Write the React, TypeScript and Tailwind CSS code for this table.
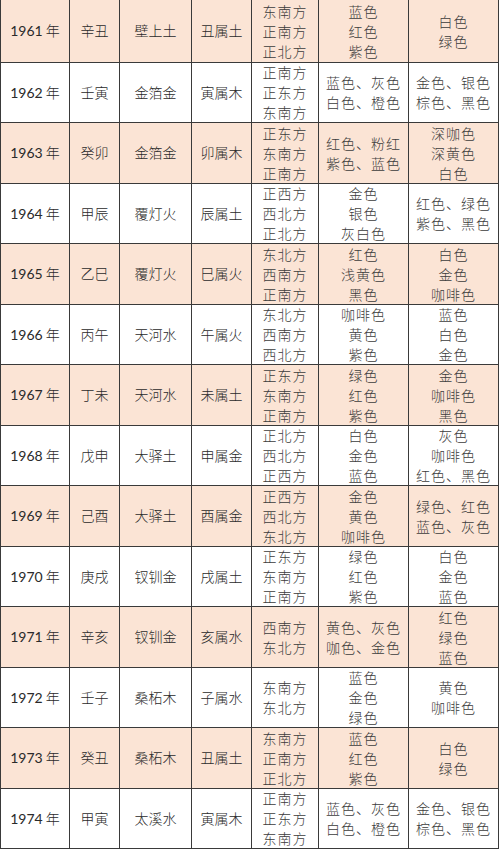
import React from "react";

type Row = {
  y: string;
  gz: string;
  ny: string;
  sx: string;
  dir: string[];
  c1: string[];
  c2: string[];
};

const rows: Row[] = [
  { y: "1961", gz: "辛丑", ny: "壁上土", sx: "丑属土", dir: ["东南方", "正南方", "正北方"], c1: ["蓝色", "红色", "紫色"], c2: ["白色", "绿色"] },
  { y: "1962", gz: "壬寅", ny: "金箔金", sx: "寅属木", dir: ["正南方", "正东方", "东南方"], c1: ["蓝色、灰色", "白色、橙色"], c2: ["金色、银色", "棕色、黑色"] },
  { y: "1963", gz: "癸卯", ny: "金箔金", sx: "卯属木", dir: ["正东方", "东南方", "正南方"], c1: ["红色、粉红", "紫色、蓝色"], c2: ["深咖色", "深黄色", "白色"] },
  { y: "1964", gz: "甲辰", ny: "覆灯火", sx: "辰属土", dir: ["正西方", "西北方", "正北方"], c1: ["金色", "银色", "灰白色"], c2: ["红色、绿色", "紫色、黑色"] },
  { y: "1965", gz: "乙巳", ny: "覆灯火", sx: "巳属火", dir: ["东北方", "西南方", "正南方"], c1: ["红色", "浅黄色", "黑色"], c2: ["白色", "金色", "咖啡色"] },
  { y: "1966", gz: "丙午", ny: "天河水", sx: "午属火", dir: ["东北方", "西南方", "西北方"], c1: ["咖啡色", "黄色", "紫色"], c2: ["蓝色", "白色", "金色"] },
  { y: "1967", gz: "丁未", ny: "天河水", sx: "未属土", dir: ["正东方", "东南方", "正南方"], c1: ["绿色", "红色", "紫色"], c2: ["金色", "咖啡色", "黑色"] },
  { y: "1968", gz: "戊申", ny: "大驿土", sx: "申属金", dir: ["正北方", "西北方", "正西方"], c1: ["白色", "金色", "蓝色"], c2: ["灰色", "咖啡色", "红色、黑色"] },
  { y: "1969", gz: "己酉", ny: "大驿土", sx: "酉属金", dir: ["正西方", "西北方", "东北方"], c1: ["金色", "黄色", "咖啡色"], c2: ["绿色、红色", "蓝色、灰色"] },
  { y: "1970", gz: "庚戌", ny: "钗钏金", sx: "戌属土", dir: ["正东方", "东南方", "正南方"], c1: ["绿色", "红色", "紫色"], c2: ["白色", "金色", "蓝色"] },
  { y: "1971", gz: "辛亥", ny: "钗钏金", sx: "亥属水", dir: ["西南方", "东北方"], c1: ["黄色、灰色", "咖色、金色"], c2: ["红色", "绿色", "蓝色"] },
  { y: "1972", gz: "壬子", ny: "桑柘木", sx: "子属水", dir: ["东南方", "东北方"], c1: ["蓝色", "金色", "绿色"], c2: ["黄色", "咖啡色"] },
  { y: "1973", gz: "癸丑", ny: "桑柘木", sx: "丑属土", dir: ["东南方", "正南方", "正北方"], c1: ["蓝色", "红色", "紫色"], c2: ["白色", "绿色"] },
  { y: "1974", gz: "甲寅", ny: "太溪水", sx: "寅属木", dir: ["正南方", "正东方", "东南方"], c1: ["蓝色、灰色", "白色、橙色"], c2: ["金色、银色", "棕色、黑色"] },
];

const cjk = "[font-family:'Noto_Sans_CJK_SC',sans-serif]";

function Lines({ items }: { items: string[] }) {
  return (
    <div className="h-[58px] flex flex-col items-center justify-center overflow-visible">
      {items.map((t, i) => (
        <div key={i} className="leading-[20px] tracking-[1px] whitespace-nowrap">
          {t}
        </div>
      ))}
    </div>
  );
}

export default function App() {
  return (
    <div className="w-[500px] h-[850px] overflow-hidden bg-white">
      <table className={`table-fixed border-collapse w-[498px] text-[14px] font-light text-[#2a2a2a] ${cjk}`}>
        <colgroup>
          <col className="w-[69px]" />
          <col className="w-[50px]" />
          <col className="w-[72px]" />
          <col className="w-[60px]" />
          <col className="w-[67px]" />
          <col className="w-[90px]" />
          <col className="w-[90px]" />
        </colgroup>
        <tbody>
          {rows.map((r, i) => {
            const bg = i % 2 === 0 ? "bg-[#fbe4d5]" : "bg-white";
            const h = i === 0 ? "h-[62px] border-t-0" : "h-[60.5px]";
            const cell = `border border-[#3a3a3a] ${bg} ${h} p-0 text-center align-middle overflow-visible`;
            return (
              <tr key={r.y}>
                <td className={cell}>
                  <span className="[font-family:Lato,'Noto_Sans_CJK_SC',sans-serif] font-normal text-[14px]">{r.y}</span>
                  <span className="ml-[3px]">年</span>
                </td>
                <td className={cell}>{r.gz}</td>
                <td className={cell}>{r.ny}</td>
                <td className={cell}>{r.sx}</td>
                <td className={`${cell} text-[#3c3c3c]`}>
                  <Lines items={r.dir} />
                </td>
                <td className={`${cell} text-[#3c3c3c]`}>
                  <Lines items={r.c1} />
                </td>
                <td className={`${cell} text-[#3c3c3c]`}>
                  <Lines items={r.c2} />
                </td>
              </tr>
            );
          })}
        </tbody>
      </table>
    </div>
  );
}
